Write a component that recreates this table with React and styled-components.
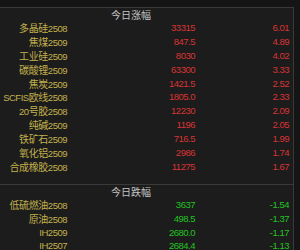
import React from 'react';
import styled, { createGlobalStyle } from 'styled-components';

const GlobalStyle = createGlobalStyle`
  html, body {
    margin: 0;
    padding: 0;
    background: #151515;
    overflow: hidden;
  }
`;

const gainers = [
  ['多晶硅2508', '33315', '6.01'],
  ['焦煤2509', '847.5', '4.89'],
  ['工业硅2509', '8030', '4.02'],
  ['碳酸锂2509', '63300', '3.33'],
  ['焦炭2509', '1421.5', '2.52'],
  ['SCFIS欧线2508', '1805.0', '2.33'],
  ['20号胶2508', '12230', '2.09'],
  ['纯碱2509', '1196', '2.05'],
  ['铁矿石2509', '716.5', '1.99'],
  ['氧化铝2509', '2986', '1.74'],
  ['合成橡胶2508', '11275', '1.67'],
];

const losers = [
  ['低硫燃油2508', '3637', '-1.54'],
  ['原油2508', '498.5', '-1.37'],
  ['IH2509', '2680.0', '-1.17'],
  ['IH2507', '2684.4', '-1.13'],
];

// split a contract name so the Chinese part can use the CJK font
const splitName = (name) =>
  name.split(/([\u4e00-\u9fff]+)/).filter(Boolean).map((part, i) =>
    /[\u4e00-\u9fff]/.test(part) ? <Han key={i}>{part}</Han> : <span key={i}>{part}</span>
  );

const Block = ({ title, rows, up }) => (
  <Section>
    <Title>{title}</Title>
    {rows.map(([name, price, pct]) => (
      <Row key={name}>
        <Name>{splitName(name)}</Name>
        <Value up={up}>{price}</Value>
        <Value up={up}>{pct}</Value>
      </Row>
    ))}
  </Section>
);

const App = () => {
  return (
    <>
      <GlobalStyle />
      <Page>
        <Panel>
          <Block title="今日涨幅" rows={gainers} up />
          <Block title="今日跌幅" rows={losers} />
        </Panel>
      </Page>
    </>
  );
};

export default App;

const Page = styled.div`
  width: 300px;
  height: 250px;
  padding-top: 7px;
  box-sizing: border-box;
  background: #151515;
  overflow: hidden;
`;

const Panel = styled.div`
  width: 293px;
  min-height: 260px;
  background: #1c1c1c;
  border-right: 1px solid #3a3a3a;
  font-family: "Liberation Sans", "Noto Sans CJK SC", sans-serif;
`;

const Section = styled.div`
  border-top: 1px solid #3a3a3a;
  padding-bottom: 10px;
`;

const Title = styled.div`
  height: 13px;
  line-height: 13px;
  padding-right: 31px;
  text-align: center;
  font-size: 10px;
  color: #c4c4c4;
  font-family: "Noto Sans CJK SC", sans-serif;
`;

const Row = styled.div`
  display: grid;
  grid-template-columns: 67px 129px 94px;
  height: 13.9px;
  line-height: 13.9px;
  font-size: 9.5px;
  letter-spacing: -0.5px;
`;

const Name = styled.span`
  text-align: right;
  color: #c2b14c;
  white-space: nowrap;
`;

const Han = styled.span`
  font-family: "Noto Sans CJK SC", sans-serif;
  font-size: 10px;
  letter-spacing: -0.4px;
`;

const Value = styled.span`
  text-align: right;
  padding-right: 1px;
  color: ${(p) => (p.up ? '#d83434' : '#22c322')};
`;
